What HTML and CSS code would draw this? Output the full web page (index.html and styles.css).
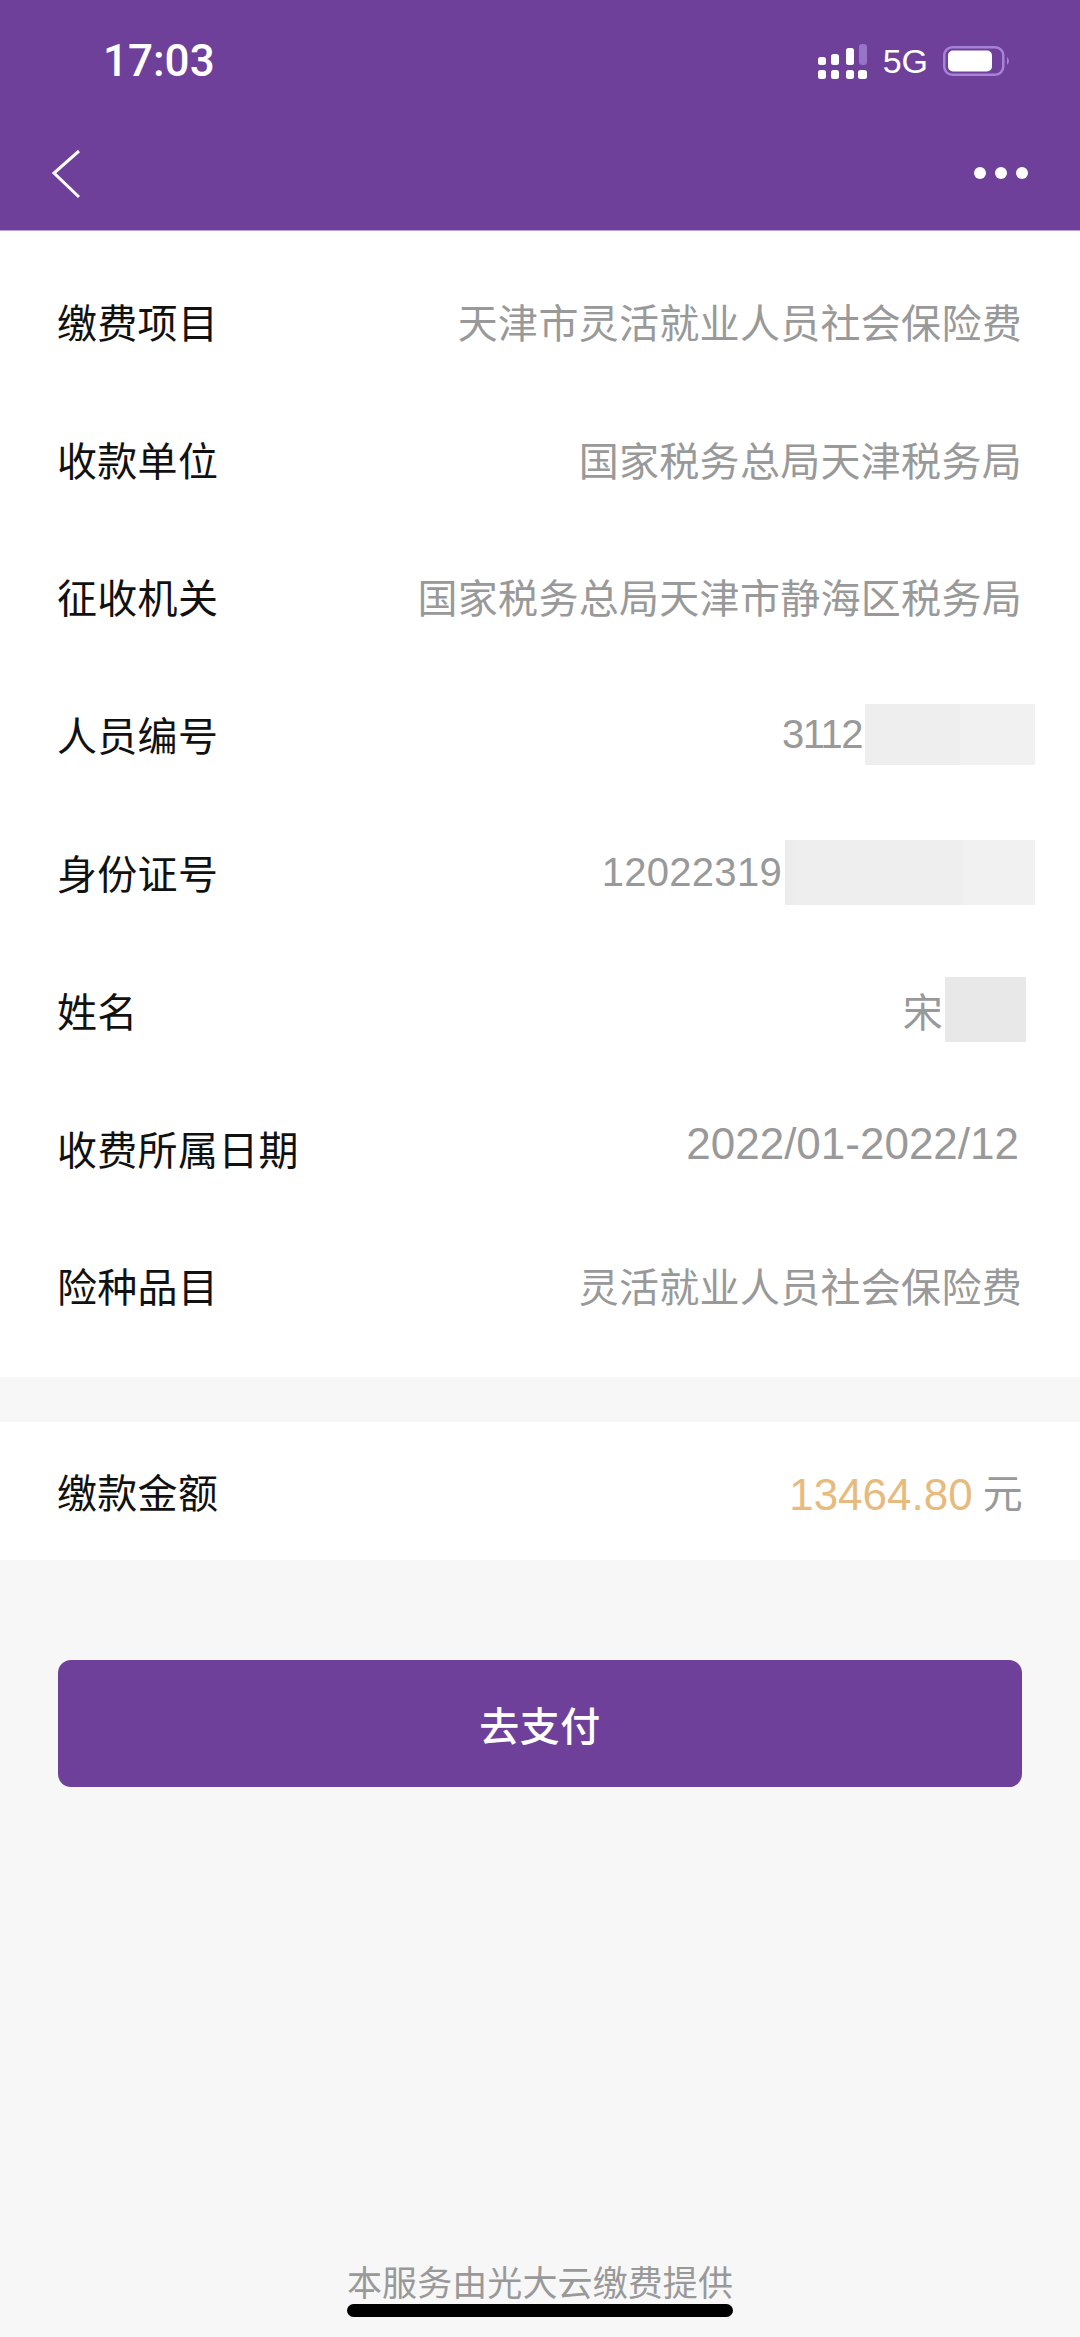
FILE: index.html
```html
<!DOCTYPE html>
<html lang="zh-CN">
<head>
<meta charset="utf-8">
<title>缴费</title>
<link rel="stylesheet" href="styles.css">
</head>
<body>
<div class="page">
  <header class="head">
    <div class="status">
      <span class="time">17:03</span>
      <div class="status-right">
        <svg class="signal" width="50" height="35" viewBox="0 0 50 35">
          <g fill="#fff">
            <rect x="0" y="13" width="8" height="8" rx="2.5"/>
            <rect x="13" y="10" width="8" height="11" rx="2.5"/>
            <rect x="28" y="4" width="8" height="17" rx="2.5"/>
            <rect x="0" y="26" width="8" height="9" rx="2.5"/>
            <rect x="13" y="26" width="8" height="9" rx="2.5"/>
            <rect x="28" y="26" width="8" height="9" rx="2.5"/>
            <rect x="40" y="26" width="9" height="9" rx="2.5"/>
          </g>
          <rect x="41" y="0" width="8" height="21" rx="3" fill="#9674c8"/>
        </svg>
        <span class="net">5G</span>
        <svg class="battery" width="68" height="30" viewBox="0 0 68 30">
          <rect x="1.25" y="1.25" width="59" height="27.5" rx="8" fill="none" stroke="#a583d6" stroke-width="2.5"/>
          <rect x="5" y="4.5" width="44" height="21" rx="5" fill="#fff"/>
          <path d="M64 11 q4 4 0 8z" fill="#a583d6"/>
        </svg>
      </div>
    </div>
    <div class="nav">
      <svg class="back" width="30" height="50" viewBox="0 0 30 50">
        <path d="M28 2 L3 24 L28 48" fill="none" stroke="#fff" stroke-width="3"/>
      </svg>
      <div class="more"><i></i><i></i><i></i></div>
    </div>
  </header>

  <section class="card list">
    <div class="row"><span class="label">缴费项目</span><span class="value">天津市灵活就业人员社会保险费</span></div>
    <div class="row"><span class="label">收款单位</span><span class="value">国家税务总局天津税务局</span></div>
    <div class="row"><span class="label">征收机关</span><span class="value">国家税务总局天津市静海区税务局</span></div>
    <div class="row"><span class="label">人员编号</span><span class="value value-mask"><span class="tight">3112</span><i class="mask mask-a"></i></span></div>
    <div class="row"><span class="label">身份证号</span><span class="value value-mask"><span>12022319</span><i class="mask mask-b"></i></span></div>
    <div class="row"><span class="label">姓名</span><span class="value value-mask"><span>宋</span><i class="mask mask-c"></i></span></div>
    <div class="row"><span class="label">收费所属日期</span><span class="value value-date">2022/01-2022/12</span></div>
    <div class="row"><span class="label">险种品目</span><span class="value">灵活就业人员社会保险费</span></div>
  </section>

  <section class="card amount">
    <span class="label">缴款金额</span>
    <span class="value amount-value"><span class="money">13464.80</span><span>元</span></span>
  </section>

  <div class="action"><button class="pay">去支付</button></div>

  <footer class="foot">
    <span class="provider">本服务由光大云缴费提供</span>
    <span class="home-bar"></span>
  </footer>
</div>
</body>
</html>
```
FILE: styles.css
```css
* { box-sizing: border-box; }
html, body { margin: 0; padding: 0; }
body {
  width: 1080px;
  height: 2337px;
  overflow: hidden;
  background: #f7f7f7;
  font-family: "Liberation Sans", "Noto Sans CJK SC", sans-serif;
}
.page { display: flex; flex-direction: column; height: 2337px; }

.head { height: 231px; background: #6e409a; color: #fff; display: flex; flex-direction: column; border-bottom: 1px solid #b9a0d6; }
.status { display: flex; justify-content: space-between; align-items: center; height: 122px; padding: 0 69px 0 103px; }
.time { font-family: Roboto, "Liberation Sans", sans-serif; font-size: 44px; font-weight: 500; }
.status-right { display: flex; align-items: center; gap: 15px; }
.signal, .battery { display: block; }
.net { font-size: 34px; }
.nav { display: flex; justify-content: space-between; align-items: center; padding: 0 52px 0 51px; height: 108px; }
.back { display: block; margin-top: -4px; }
.more { display: flex; gap: 9px; margin-top: -6px; }
.more i { width: 12px; height: 12px; border-radius: 50%; background: #fff; display: block; }

.card { background: #fff; }
.list { padding: 21px 0 0; height: 1146px; }
.row { display: flex; justify-content: space-between; align-items: center; height: 137.8px; padding: 0 58px 0 57px; }
.label { font-size: 40px; color: #111; letter-spacing: 0.3px; }
.value { font-size: 40px; color: #999; letter-spacing: 0.3px; }
.value-mask { display: flex; align-items: center; }
.value-date { font-size: 44px; letter-spacing: 0; margin-top: -8px; margin-right: 3px; }
.tight { letter-spacing: -1.5px; }
.mask { display: block; margin-left: 3px; }
.mask-a { width: 170px; height: 61px; margin-right: -13px; background: linear-gradient(90deg, #eee 56%, #f1f1f1 56%); }
.mask-b { width: 250px; height: 65px; margin-right: -13px; background: linear-gradient(90deg, #ececec, #eee 8%, #eee 70%, #f1f1f1 72%); }
.mask-c { width: 81px; height: 65px; margin-left: 2px; margin-right: -4px; background: #e8e8e8; }

.amount { margin-top: 45px; height: 138px; display: flex; justify-content: space-between; align-items: center; padding: 0 57px 0 57px; }
.amount-value { display: flex; align-items: center; gap: 10px; }
.money { color: #e6bb7d; font-size: 44px; letter-spacing: 0; margin-top: 8px; }

.action { padding: 100px 58px 0; }
.pay {
  display: block; width: 100%; height: 127px; border: 0; border-radius: 13px;
  background: #6e409a; color: #fff; font: 500 40px "Liberation Sans", "Noto Sans CJK SC", sans-serif; letter-spacing: 0.5px;
}

.foot { margin-top: auto; display: flex; flex-direction: column; align-items: center; padding-bottom: 20px; }
.provider { font-size: 35px; line-height: 42px; color: #999; letter-spacing: 0.1px; transform: translateY(1px); }
.home-bar { width: 386px; height: 13px; border-radius: 7px; background: #000; }
```
